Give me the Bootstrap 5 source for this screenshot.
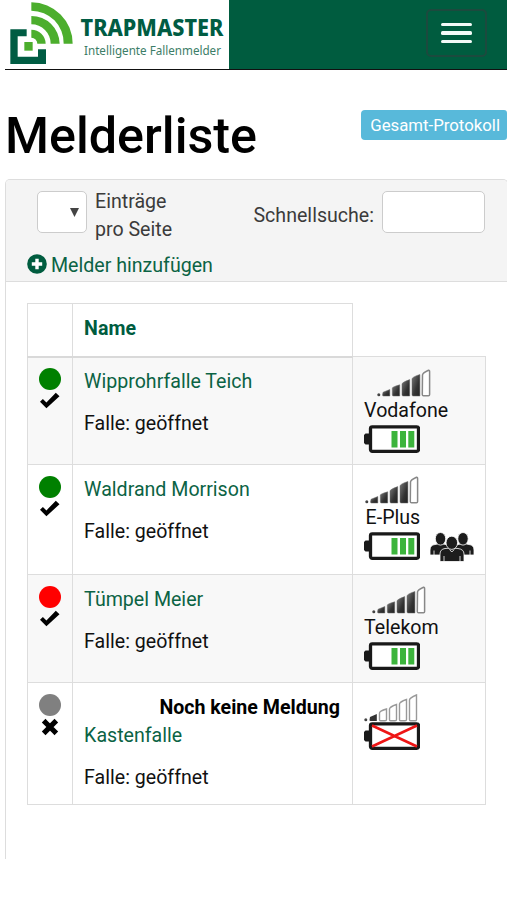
<!DOCTYPE html>
<html lang="de">
<head>
<meta charset="utf-8">
<meta name="viewport" content="width=device-width, initial-scale=1">
<title>Melderliste</title>
<link rel="stylesheet" href="https://cdn.jsdelivr.net/npm/bootstrap@5.3.0/dist/css/bootstrap.min.css">
<style>
body{font-family:Roboto,"Liberation Sans",sans-serif;font-size:19.6px;line-height:28px;color:#111;background:#fff;overflow:hidden;height:900px}
a{color:#0b6344;text-decoration:none}
.topbar{margin-left:5px;height:70px;background:#005c3f;border-bottom:1.5px solid #111}
.brandbox{width:223.5px;background:#fff}
.burger{width:61px;height:48px;margin:9px 20px 0 0;border:2px solid #1c4a3e;border-radius:5px;gap:5px}
.burger span{width:31px;height:3.4px;border-radius:1.5px;background:#f3fbf8}
.titlebar{margin:39px 0 0 5px;height:70px}
.titlebar h1{font-size:50.3px;line-height:53px;font-weight:500;color:#000;margin:0}
.protocol{margin-top:1px;height:30px;padding:0 7px 0 9px;font-size:16.8px;line-height:30px;background:#58b9da;color:#fff;border:0;border-radius:4px 3px 3px 4px}
.panel{margin:0 -1px 0 5px;height:680px;border:1.4px solid #ddd;border-bottom:0;border-radius:5px 5px 0 0}
.panel-top{height:102px;background:#f4f4f4;border-bottom:1.4px solid #ddd;border-radius:4px 4px 0 0;color:#3b3b3b;padding:8px 22px 0 21px}
.field{height:42px;border:1.4px solid #ccc;border-radius:5px;background:#fff;margin-top:3px}
.field-size{width:50px;margin-left:10px;padding-right:7px}
.field-search{width:103px}
.search-label{margin:14px 8px 0 0}
.add-link{line-height:28px;margin-top:8px}
.add-link svg{margin:2px 4px 0 0}
.sensors{width:458px;margin:21px 0 0 21px;table-layout:fixed;border-collapse:collapse}
.sensors td,.sensors th{border:1.4px solid #ddd;vertical-align:top;padding:11px 11.6px 0}
.sensors th{height:53px;border-bottom:2px solid #d9d9d9;color:#005c3f;font-weight:700}
.sensors th.blank{border:0}
.sensors td:first-child{padding:11px 0 0;text-align:center}
.odd td{background:#f8f8f8}
.r1{height:108px}.r2{height:110px}.r3{height:108px}.r4{height:122px}
.sensors .r1 td{padding-top:10px}
.sensors .r1 td:last-child{padding-top:12px}
.dot{width:22px;height:22px;border-radius:50%;margin:0 auto}
.sensors svg{display:block}
.state-mark{margin:2px auto 0}
.sensors p{margin:14px 0 0}
.carrier{width:fit-content}
.carrier .sig{margin-right:4px}
.carrier-tight{padding-left:1.5px}
.carrier-tight .sig{margin:0 0 0 -2px}
.crew{margin-left:9px}
</style>
<script src="https://cdn.jsdelivr.net/npm/bootstrap@5.3.0/dist/js/bootstrap.bundle.min.js"></script>
</head>
<body>
<svg width="0" height="0" class="position-absolute">
<defs>
<linearGradient id="gr" x1="0" y1="0" x2="1" y2="1"><stop offset="0" stop-color="#777"/><stop offset=".6" stop-color="#333"/><stop offset="1" stop-color="#222"/></linearGradient>
<symbol id="signal4" viewBox="0 0 54 28">
<circle cx="1.8" cy="25.8" r="1.5" fill="#444"/>
<g fill="url(#gr)" stroke="#666" stroke-width=".5"><path d="M6 23.3L12.800 20.500V27H6.500Q5.500 27 5.500 26Z"/><path d="M15.300 19Q15.300 18 22.700 15.800V27H16.500Q15.300 27 15.300 26Z"/><path d="M25 15Q25 13.500 32.700 10.600V27H26.300Q25 27 25 26Z"/><path d="M35 10Q35 8 42.900 5.500V27H36.300Q35 27 35 26Z"/></g>
<path d="M45.500 6Q45.500 4 51.500 1.200Q52.600 1 52.600 2.500V25.500Q52.600 26.800 51.500 26.800H46.500Q45.300 26.800 45.300 25.500Z" fill="#fff" stroke="#888" stroke-width="1.500"/>
</symbol>
<symbol id="signal1" viewBox="0 0 54 28">
<circle cx="1.800" cy="25.800" r="1.500" fill="#444"/>
<path d="M6 23L12.800 20V27H6.500Q5.500 27 5.500 26Z" fill="#333"/>
<g fill="#fff" stroke="#999" stroke-width="1.400"><path d="M15.500 19Q15.500 17 22.500 15V25.500Q22.500 26.800 21 26.800H16.500Q15.500 26.800 15.500 25.500Z"/><path d="M25.500 15Q25.500 13 32.500 10.500V25.500Q32.500 26.800 31 26.800H26.500Q25.500 26.800 25.500 25.500Z"/><path d="M35.500 10Q35.500 8 42.500 5.500V25.500Q42.500 26.800 41 26.800H36.500Q35.500 26.800 35.500 25.500Z"/><path d="M45.500 6Q45.500 4 52.500 1V25.500Q52.500 26.800 51.500 26.800H46.500Q45.500 26.800 45.500 25.500Z"/></g>
</symbol>
<symbol id="shell" viewBox="0 0 56 28"><rect x="6.500" y="1.800" width="48" height="24.500" rx="1.800" fill="#fff" stroke="#191919" stroke-width="3.300"/><path d="M5 8.500H1.500L0 10V18L1.500 19.500H5Z" fill="#191919"/></symbol>
<symbol id="battery" viewBox="0 0 56 28"><use href="#shell" width="56" height="28"/><path d="M27.500 6h6v16.500h-6zM36 6h6v16.500h-6zM44.300 6h6v16.500h-6z" fill="#3cb43c"/></symbol>
<symbol id="check" viewBox="0 0 22 17"><path d="M1 9.800L3.900 6.900L7.400 10.400L16.800 .8L20.500 4.300L7.400 16.200Z" fill="#000"/></symbol>
</defs>
</svg>

<header class="topbar d-flex justify-content-between">
  <a href="#" class="brandbox d-block">
    <svg class="d-block overflow-visible" width="223" height="68" viewBox="5 0 223 68">
      <g transform="scale(.33333)">
        <path d="M31 88H80V109H53V170H114V148H138V192H31Z" fill="#005c43"/>
        <g fill="#4cae2d"><path d="M73 126H98V152H73Z"/><path d="M94 7A124 124 0 0 1 218 131H191A97 97 0 0 0 94 32Z"/><path d="M94 48A85 85 0 0 1 179 131H152A58 58 0 0 0 94 73Z"/><path d="M94 89A43 43 0 0 1 137 131H112A18 18 0 0 0 94 113Z"/></g>
      </g>
      <text x="80.500" y="36" textLength="143" lengthAdjust="spacingAndGlyphs" font-family="Noto Sans,sans-serif" font-weight="800" font-size="23.500" fill="#005c43">TRAPMASTER</text>
      <text x="84" y="55" textLength="137" lengthAdjust="spacingAndGlyphs" font-family="Noto Sans,sans-serif" font-size="13" fill="#3c7d67">Intelligente Fallenmelder</text>
    </svg>
  </a>
  <button class="burger bg-transparent p-0 d-flex flex-column align-items-center justify-content-center" aria-label="Menü"><span></span><span></span><span></span></button>
</header>

<div class="titlebar d-flex justify-content-between align-items-start">
  <h1>Melderliste</h1>
  <a href="#" class="btn protocol">Gesamt-Protokoll</a>
</div>

<main class="panel">
  <div class="panel-top">
    <div class="d-flex align-items-start">
      <div class="field field-size d-flex align-items-center justify-content-end"><svg width="9" height="9" viewBox="0 0 9 9"><path d="M0 0H9L4.500 9Z" fill="#444"/></svg></div>
      <div class="ms-2">Einträge<br>pro Seite</div>
      <label class="search-label ms-auto" for="q">Schnellsuche:</label>
      <input id="q" class="field field-search">
    </div>
    <a href="#" class="add-link d-flex"><svg width="20" height="20" viewBox="0 0 20 20" class="flex-shrink-0"><circle cx="10" cy="10" r="9.800" fill="#005c3f"/><path d="M8.300 4.800h3.400v3.500h3.500v3.400h-3.500v3.500H8.300v-3.500H4.800V8.300h3.500z" fill="#fff"/></svg><span>Melder hinzufügen</span></a>
  </div>

  <table class="sensors">
    <colgroup><col style="width:44.500px"><col style="width:280px"><col style="width:133px"></colgroup>
    <thead><tr><th></th><th>Name</th><th class="blank"></th></tr></thead>
    <tbody>
      <tr class="r1 odd">
        <td><div class="dot" style="background:#008000"></div><svg class="state-mark" width="22" height="17"><use href="#check"/></svg></td>
        <td><a href="#">Wipprohrfalle Teich</a><p>Falle: geöffnet</p></td>
        <td><div class="carrier d-flex flex-column align-items-center"><svg class="sig" width="54" height="28"><use href="#signal4"/></svg><span>Vodafone</span></div><svg width="56" height="28"><use href="#battery"/></svg></td>
      </tr>
      <tr class="r2">
        <td><div class="dot" style="background:#008000"></div><svg class="state-mark" width="22" height="17"><use href="#check"/></svg></td>
        <td><a href="#">Waldrand Morrison</a><p>Falle: geöffnet</p></td>
        <td><div class="carrier carrier-tight d-flex flex-column align-items-center"><svg class="sig" width="54" height="28"><use href="#signal4"/></svg><span>E-Plus</span></div>
          <div class="d-flex"><svg width="56" height="28" class="flex-shrink-0"><use href="#battery"/></svg>
          <svg class="crew flex-shrink-0" width="46" height="30" viewBox="0 0 46 30"><g fill="#1c1c1c" stroke="#fff" stroke-width=".8"><path d="M1 23V18Q1 13 6 12.500L11 11.500L17 12.500Q22 13 22 18V23Z"/><path d="M24 23V18Q24 13 29 12.500L35 11.500L40 12.500Q45 13 45 18V23Z"/><ellipse cx="11.500" cy="6.800" rx="5.200" ry="6.300"/><ellipse cx="34" cy="6.800" rx="5.200" ry="6.300"/><path d="M11 29.500V22Q11 17.300 16 16.500L22.500 16L29 16.500Q35 17.300 35 22V29.500Z"/><ellipse cx="22.800" cy="10.800" rx="5.800" ry="6.600"/></g><path d="M20.500 17.500L22.800 20L25.300 17.500M15 24V29.500M31 24V29.500M5 18.500V23M41 18.500V23" fill="none" stroke="#fff" stroke-width=".8"/></svg></div></td>
      </tr>
      <tr class="r3 odd">
        <td><div class="dot" style="background:#f00"></div><svg class="state-mark" width="22" height="17"><use href="#check"/></svg></td>
        <td><a href="#">Tümpel Meier</a><p>Falle: geöffnet</p></td>
        <td><div class="carrier d-flex flex-column align-items-center"><svg class="sig" width="54" height="28"><use href="#signal4"/></svg><span>Telekom</span></div><svg width="56" height="28"><use href="#battery"/></svg></td>
      </tr>
      <tr class="r4">
        <td><div class="dot" style="background:#808080"></div><svg class="state-mark" width="18" height="18" viewBox="0 0 18 18"><path d="M4.500 4.500L13.500 13.500M13.500 4.500L4.500 13.500" stroke="#000" stroke-width="5.200" stroke-linecap="square" fill="none"/></svg></td>
        <td><div class="text-end fw-bold text-black">Noch keine Meldung</div><a href="#">Kastenfalle</a><p>Falle: geöffnet</p></td>
        <td><svg class="sig" width="54" height="28"><use href="#signal1"/></svg><svg width="56" height="28" viewBox="0 0 56 28"><use href="#shell" width="56" height="28"/><path d="M8 3.500L53 24.500M53 3.500L8 24.500" stroke="#ee1515" stroke-width="2.600"/></svg></td>
      </tr>
    </tbody>
  </table>
</main>
</body>
</html>
